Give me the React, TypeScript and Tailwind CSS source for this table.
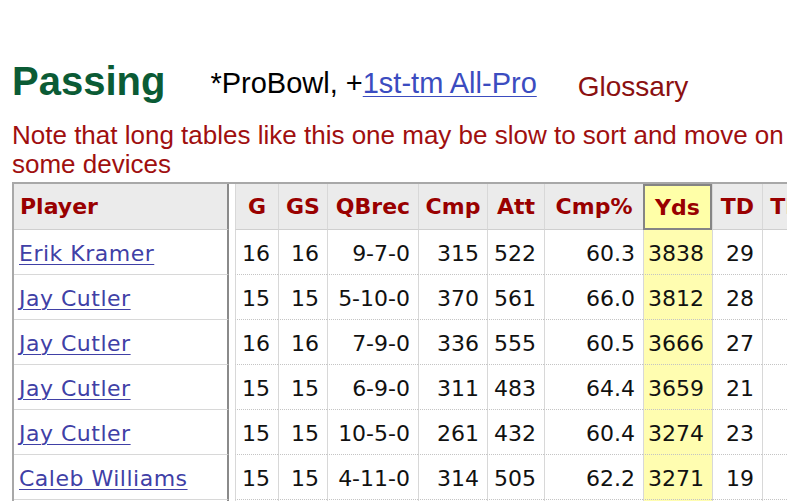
import React from "react";

type Row = {
  player: string;
  g: string;
  gs: string;
  qb: string;
  cmp: string;
  att: string;
  pct: string;
  yds: string;
  td: string;
};

const rows: Row[] = [
  { player: "Erik Kramer", g: "16", gs: "16", qb: "9-7-0", cmp: "315", att: "522", pct: "60.3", yds: "3838", td: "29" },
  { player: "Jay Cutler", g: "15", gs: "15", qb: "5-10-0", cmp: "370", att: "561", pct: "66.0", yds: "3812", td: "28" },
  { player: "Jay Cutler", g: "16", gs: "16", qb: "7-9-0", cmp: "336", att: "555", pct: "60.5", yds: "3666", td: "27" },
  { player: "Jay Cutler", g: "15", gs: "15", qb: "6-9-0", cmp: "311", att: "483", pct: "64.4", yds: "3659", td: "21" },
  { player: "Jay Cutler", g: "15", gs: "15", qb: "10-5-0", cmp: "261", att: "432", pct: "60.4", yds: "3274", td: "23" },
  { player: "Caleb Williams", g: "15", gs: "15", qb: "4-11-0", cmp: "314", att: "505", pct: "62.2", yds: "3271", td: "19" },
];

const cols = [
  { label: "G", w: "w-[43px]", key: "g" },
  { label: "GS", w: "w-[49px]", key: "gs" },
  { label: "QBrec", w: "w-[91px]", key: "qb" },
  { label: "Cmp", w: "w-[69px]", key: "cmp" },
  { label: "Att", w: "w-[57px]", key: "att" },
  { label: "Cmp%", w: "w-[99px]", key: "pct" },
  { label: "Yds", w: "w-[69px]", key: "yds", hl: true },
  { label: "TD", w: "w-[50px]", key: "td" },
  { label: "TD%", w: "w-[71px]", key: "" },
] as const;

export default function App() {
  return (
    <div className="w-[800px] min-h-[501px] bg-white overflow-hidden">
      <div className="flex items-start pl-[12px] pt-[61px] font-['Liberation_Sans',Arial,sans-serif]">
        <div className="text-[40px] leading-none font-bold text-[#0b5b35] h-[40px]">Passing</div>
        <div className="ml-[45px] mt-[8px] text-[29px] leading-none text-black whitespace-nowrap">
          *ProBowl, +<span className="text-[#3b4cc0] underline decoration-1 underline-offset-[3px]">1st-tm All-Pro</span>
        </div>
        <div className="ml-[41px] mt-[12px] text-[28px] leading-none text-[#8b1010]">Glossary</div>
      </div>

      <div className="mt-[20px] pl-[12px] w-[787px] text-[26px] leading-[29px] text-[#a00f0f] font-['Liberation_Sans',Arial,sans-serif]">
        Note that long tables like this one may be slow to sort and move on some devices
      </div>

      <div className="mt-[3px] ml-[12px] w-[775px] overflow-hidden border-t-2 border-l-2 border-[#a8a8a8] font-['DejaVu_Sans',Verdana,sans-serif] text-[22px]">
        {/* header */}
        <div className="flex h-[46px] w-max">
          <div className="w-[215px] shrink-0 flex items-center pl-[6px] bg-[#ebebeb] border-r-2 border-r-[#8a8a8a] border-b border-b-[#cfcfcf] font-bold text-[#990000]">
            Player
          </div>
          <div className="w-[6px] shrink-0 bg-white" />
          {cols.map((c) => (
            <div
              key={c.label}
              className={
                c.w +
                " shrink-0 flex items-center justify-center font-bold text-[#990000] " +
                ("hl" in c && c.hl
                  ? "bg-[#ffffa8] border-2 border-[#858585]"
                  : "bg-[#ebebeb] border-l border-l-[#d8d8d8] border-b border-b-[#cfcfcf]")
              }
            >
              {c.label}
            </div>
          ))}
        </div>
        {/* rows */}
        {rows.map((r, i) => (
          <div key={i} className="flex h-[45px] w-max text-[#111]">
            <div className="w-[215px] shrink-0 flex items-center pl-[5px] pt-[2px] border-r-2 border-r-[#8a8a8a] border-b border-b-[#d8d8d8]">
              <span className="text-[#4040a6] tracking-[0.5px] underline decoration-1 underline-offset-[3px]">{r.player}</span>
            </div>
            <div className="w-[6px] shrink-0" />
            {cols.map((c) => (
              <div
                key={c.label}
                className={
                  c.w +
                  " shrink-0 flex items-center justify-end pr-[8px] pt-[2px] border-l border-l-[#d8d8d8] border-b border-b-[#c4c4c4] [border-bottom-style:dotted] " +
                  ("hl" in c && c.hl ? "bg-[#fffdb0]" : "bg-white")
                }
              >
                {c.key ? (r as any)[c.key] : ""}
              </div>
            ))}
          </div>
        ))}
        <div className="flex h-[20px] w-max">
          <div className="w-[215px] shrink-0 border-r-2 border-r-[#8a8a8a]" />
          <div className="w-[6px] shrink-0" />
          {cols.map((c) => (
            <div
              key={c.label}
              className={c.w + " shrink-0 border-l border-l-[#d8d8d8] " + ("hl" in c && c.hl ? "bg-[#fffdb0]" : "bg-white")}
            />
          ))}
        </div>
      </div>
    </div>
  );
}
